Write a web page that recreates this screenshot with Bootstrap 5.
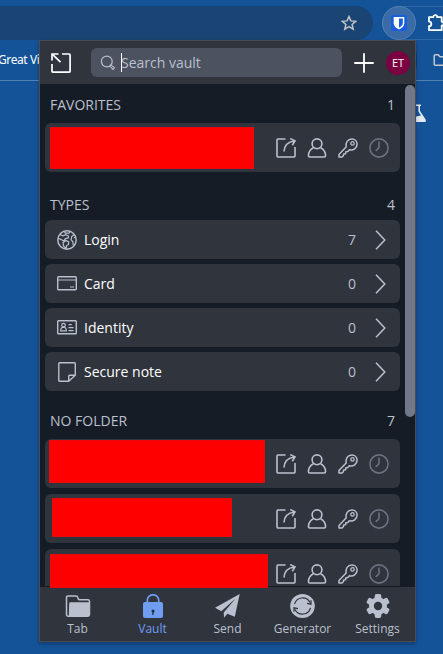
<!DOCTYPE html>
<html lang="en">
<head>
<meta charset="utf-8">
<meta name="viewport" content="width=device-width, initial-scale=1">
<title>Vault</title>
<link href="https://cdn.jsdelivr.net/npm/bootstrap@5.3.0/dist/css/bootstrap.min.css" rel="stylesheet">
<style>
body{width:443px;height:654px;background:#155399;font:14px/20px "Open Sans",sans-serif;color:#bac0ce}
svg{display:block;flex:none;fill:none;stroke:currentColor}
.tabs-edge{height:6px}
.toolbar{height:34px}
.omnibox{width:373px;height:34px;background:#1a4473;border-radius:0 17px 17px 0;padding-right:16px;color:#c3c5ca}
.ext-pill{width:80px;height:34px;margin-left:9px;border:1px solid #2f68a8;border-radius:17px 0 0 17px}
.ext-active{width:34px;height:34px;margin:-1px;background:#3b6ba6;border:1px solid #5180b5;border-radius:50%}
.bookmarks{height:41px;border-bottom:1px solid #5181b5;color:#fff;font:12px/40px "Noto Sans",sans-serif}
.bm-label{margin-left:-2px;letter-spacing:-.4px}
.bm-sep{width:1px;height:16px;background:#0f3f78}
.popup{left:39px;top:40px;width:377px;height:602px;border:1px solid #4a4c51;background:#161c25;box-shadow:0 2px 4px rgba(0,0,0,.3)}
.topbar{height:43px;background:#2f343d;color:#fff;padding:0 5px 0 11px}
.search-field{width:251px;height:29px;margin-left:20px;background:#4c525f;border-radius:6px;padding-left:9px;color:#bac0ce}
.caret{width:1px;height:19px;background:#fff;margin:0 -1px 0 5px}
.avatar-dot{width:24px;height:24px;margin-left:12px;background:#7b0041;font-size:11px;color:#fff}
.vault-list{height:502px;padding-left:5px}
.listing{width:355px}
.heading{height:39px;padding:3px 5px 0}
.heading-types{height:32px;padding-top:2px}
.heading-folder{height:37px;padding-top:1px}
.item{height:49px;margin-bottom:6px;background:#2f343d;border-radius:6px;padding-right:11px}
.item-cut{height:37px;margin-bottom:0;border-radius:6px 6px 0 0}
.item-cut .actions{height:49px}
.actions{gap:11px;height:100%}
.off{color:#6b7180}
.redact{background:#f00;outline:1px solid rgba(200,20,30,.4);outline-offset:-1px;position:relative;z-index:1}
.r1{width:204px;height:42px;margin:4px 0 0 5px}
.r2{width:216px;height:43px;margin:1px 0 0 4px}
.r3{width:180px;height:39px;margin:4px 0 0 7px}
.r4{width:218px;height:34px;margin:5px 0 0 5px}
.kind{height:39px;margin-bottom:5px;background:#2f343d;border-radius:6px;padding:0 14px 0 12px}
.kind-name{color:#fff;margin-left:7px}
.kind-count{margin-right:19px}
.gap-types{height:10px}
.gap-folder{height:6px}
.scroll-track{width:10px}
.thumb{width:10px;height:332px;margin-top:1px;background:#70788a;border-radius:5px}
.bottom-nav{height:54px;background:#2f343d;margin-top:1px}
.tab-item{padding-top:7px;font-size:12px;line-height:17px}
.tab-item span{margin-top:2px}
.tab-on{color:#6f9df1}
.flask{left:416px;top:104px}
</style>
<script src="https://cdn.jsdelivr.net/npm/bootstrap@5.3.0/dist/js/bootstrap.bundle.min.js"></script>
</head>
<body class="position-relative overflow-hidden">
<svg class="d-none">
<symbol id="launch" viewBox="0 0 20 20"><path d="M9.5 1H1.9Q1 1 1 1.9v16.2q0 .9.9.9h16.2q.9 0 .9-.9V9M8 13.5C8.2 8 11.5 4 18.5 3M14.2.6l4.8 2.3-2.7 4.3" stroke-width="1.6"/></symbol>
<symbol id="person" viewBox="0 0 20 20"><circle cx="10" cy="5.8" r="4.9" stroke-width="1.6"/><path d="M6.4 9.8C3.2 11.4 1.6 13.9 1.4 17.6q0 1.4 1.4 1.4h14.4q1.4 0 1.4-1.4c-.2-3.7-1.8-6.2-5-7.8" stroke-width="1.6"/></symbol>
<symbol id="key" viewBox="0 0 20 20"><path d="M8.1 9.1C7.4 5 9.6.9 13.9.9c3 0 5.2 2.3 5.2 5.2 0 4.2-3.9 6.6-7.7 5.6l-1.6 1.8-1.9.2-.3 2-1.9.2-.4 1.9-1.3 1.2H1v-2.6Z" stroke-width="1.5" stroke-linejoin="round"/><circle cx="14.5" cy="5.4" r="1.7" stroke-width="1.3"/></symbol>
<symbol id="clock" viewBox="0 0 20 20"><circle cx="10" cy="10" r="9.1" stroke-width="1.6"/><path d="M10 3.6v5.5q0 1.5-3.4 3.7" stroke-width="1.6"/></symbol>
<symbol id="chev" viewBox="0 0 11 20"><path d="m1 .7 8.8 9.3L1 19.3" stroke-width="1.5"/></symbol>
</svg>

<div class="tabs-edge"></div>
<div class="toolbar d-flex">
  <div class="omnibox flex-shrink-0 d-flex align-items-center justify-content-end"><svg width="16" height="16" viewBox="0 0 16 16"><path d="m8 1.5 1.9 4.4 4.8.4-3.6 3.2 1.1 4.7L8 11.7l-4.2 2.5 1.1-4.7-3.6-3.2 4.8-.4Z" stroke-width="1.5"/></svg></div>
  <div class="ext-pill d-flex align-items-center flex-shrink-0">
    <div class="ext-active d-flex align-items-center justify-content-center flex-shrink-0"><svg width="16" height="16" viewBox="0 0 16 16"><rect width="16" height="16" rx="2" fill="#175ddc" stroke="none"/><path d="M2.7 2h10.6v6.2c0 3-2.4 4.7-5.3 6.2-2.9-1.5-5.3-3.2-5.3-6.2Z" fill="#fff" stroke="none"/><path d="M8 3.6h3.8v4.5c0 2-1.5 3.3-3.8 4.7Z" fill="#175ddc" stroke="none"/></svg></div>
    <svg class="text-white ms-2 ps-1" width="24" height="18" viewBox="0 0 20 18"><path d="M2 3.2h4.2a2 2 0 0 1 4 0h4.5v4.5a2 2 0 0 1 0 4v4.5H2v-4a2.3 2.3 0 0 0 0-4.6Z" stroke-width="1.8" stroke-linejoin="round"/></svg>
  </div>
</div>
<div class="bookmarks d-flex align-items-center">
  <span class="bm-label text-nowrap">Great Vi</span>
  <div class="ms-auto d-flex align-items-center"><div class="bm-sep"></div><svg class="ms-3" width="10" height="14" viewBox="0 0 10 14" color="#c3c7ce"><path d="M12 12.2H2.2q-1 0-1-1V2.7q0-1 1-1h3l1.8 2h5" stroke-width="1.5"/></svg></div>
</div>
<svg class="flask position-absolute" width="12" height="19" viewBox="0 0 12 19"><path d="M0 .4h5V2H4v5l5.5 8.2Q10.6 18 8.5 18H0Z" fill="#e3e9f2" stroke="none"/><path d="M0 2h2.4v5.5L5 11.5 0 12.6Z" fill="#155399" stroke="none"/></svg>

<main class="popup position-absolute">
  <header class="topbar d-flex align-items-center">
    <svg width="20" height="20" viewBox="0 0 20 20"><path d="M11 1h7.2q.9 0 .9.9v16.3q0 .9-.9.9H1.9q-.9 0-.9-.9V11M1 7.5V1h6.5M1.2 1.2l8.3 8" stroke-width="1.7"/></svg>
    <div class="search-field d-flex align-items-center"><svg width="16" height="16" viewBox="0 0 16 16"><circle cx="6.8" cy="6.5" r="5.4" stroke-width="1.2"/><path d="m9.9 11 1.2-1.1 3.4 3-1.5 1.6Z" stroke-width="1.1"/></svg><div class="caret"></div><span>Search vault</span></div>
    <svg class="ms-auto" width="20" height="20" viewBox="0 0 20 20"><path d="M10 .3v19.4M.3 10h19.4" stroke-width="1.8"/></svg>
    <div class="avatar-dot rounded-circle d-flex align-items-center justify-content-center">ET</div>
  </header>

  <div class="vault-list d-flex justify-content-between">
    <div class="listing">
      <div class="heading d-flex align-items-center justify-content-between"><span>FAVORITES</span><span>1</span></div>
      <div class="item d-flex justify-content-between"><div class="redact r1"></div><div class="actions d-flex align-items-center"><svg width="20" height="20"><use href="#launch"/></svg><svg width="20" height="20"><use href="#person"/></svg><svg width="20" height="20"><use href="#key"/></svg><svg class="off" width="20" height="20"><use href="#clock"/></svg></div></div>

      <div class="gap-types"></div>
      <div class="heading heading-types d-flex align-items-center justify-content-between"><span>TYPES</span><span>4</span></div>
      <div class="kind d-flex align-items-center"><svg width="20" height="20" viewBox="0 0 20 20"><circle cx="10" cy="10" r="9.2" stroke-width="1.4"/><path d="M6.8 1.6 9 3.3l3.4-.4.4-1.4M3 4.5l3 1.3 2.5-1.2 2.8 1.2.2 2-3 .8-1.8 2.3-2.9-1.7L1 8.4M6 12.8l3-2.3 2.7 1.4-.2 2.5-2 1.4-.4 2.8-2.4-2.4ZM17.2 4.6l-2.5 1.9-.6 3.4 1.7 1.7.5 3.7M18.8 8l-1.8-.6" stroke-width="1.2"/></svg><span class="kind-name">Login</span><span class="kind-count ms-auto">7</span><svg width="11" height="20"><use href="#chev"/></svg></div>
      <div class="kind d-flex align-items-center"><svg width="20" height="20" viewBox="0 0 20 20"><rect x=".7" y="2.8" width="18.6" height="13" rx="1" stroke-width="1.4"/><path d="M.7 6h18.6M13 13h4" stroke-width="1.2"/></svg><span class="kind-name">Card</span><span class="kind-count ms-auto">0</span><svg width="11" height="20"><use href="#chev"/></svg></div>
      <div class="kind d-flex align-items-center"><svg width="20" height="20" viewBox="0 0 20 20"><rect x=".7" y="2.8" width="18.6" height="13" rx=".8" stroke-width="1.4"/><circle cx="6.5" cy="7.1" r="1.8" stroke-width="1.2"/><path d="M3.6 12.9q0-2.6 1.7-3.6h2.4q1.7 1 1.7 3.6ZM11.5 6.6h3.3M11.5 9.6h5M11.5 12.6h5" stroke-width="1.2"/></svg><span class="kind-name">Identity</span><span class="kind-count ms-auto">0</span><svg width="11" height="20"><use href="#chev"/></svg></div>
      <div class="kind d-flex align-items-center"><svg width="20" height="20" viewBox="0 0 20 20"><path d="M11.7 19.2H2.8q-1 0-1-1V1.8q0-1 1-1h14.5q1 0 1 1v11.5ZM11.7 19.2v-4.9q0-1 1-1h5.6" stroke-width="1.4" stroke-linejoin="round"/></svg><span class="kind-name">Secure note</span><span class="kind-count ms-auto">0</span><svg width="11" height="20"><use href="#chev"/></svg></div>

      <div class="gap-folder"></div>
      <div class="heading heading-folder d-flex align-items-center justify-content-between"><span>NO FOLDER</span><span>7</span></div>
      <div class="item d-flex justify-content-between"><div class="redact r2"></div><div class="actions d-flex align-items-center"><svg width="20" height="20"><use href="#launch"/></svg><svg width="20" height="20"><use href="#person"/></svg><svg width="20" height="20"><use href="#key"/></svg><svg class="off" width="20" height="20"><use href="#clock"/></svg></div></div>
      <div class="item d-flex justify-content-between"><div class="redact r3"></div><div class="actions d-flex align-items-center"><svg width="20" height="20"><use href="#launch"/></svg><svg width="20" height="20"><use href="#person"/></svg><svg width="20" height="20"><use href="#key"/></svg><svg class="off" width="20" height="20"><use href="#clock"/></svg></div></div>
      <div class="item item-cut d-flex justify-content-between"><div class="redact r4"></div><div class="actions d-flex align-items-center"><svg width="20" height="20"><use href="#launch"/></svg><svg width="20" height="20"><use href="#person"/></svg><svg width="20" height="20"><use href="#key"/></svg><svg class="off" width="20" height="20"><use href="#clock"/></svg></div></div>
    </div>
    <div class="scroll-track"><div class="thumb"></div></div>
  </div>

  <nav class="bottom-nav row g-0 text-center">
    <div class="tab-item col d-flex flex-column align-items-center"><svg width="26" height="24" viewBox="0 0 26 24"><path d="M4 22.2H3.2Q1.5 22.2 1.5 20.5V3.6Q1.5 2 3.1 2h8q1.3 0 1.6 1.2l.5 1.6q.3 1 1.4 1h8.2q1.7 0 1.7 1.6v13.1q0 1.7-1.7 1.7Z" stroke-width="1.5"/><path d="M4.2 9.5q0-1.3 1.3-1.3h19v13q0 1-1 1H5q-1.2 0-1.2-1.2Z" fill="currentColor" stroke="none"/></svg><span>Tab</span></div>
    <div class="tab-item tab-on col d-flex flex-column align-items-center"><svg width="24" height="24" viewBox="0 0 24 24"><path d="M6.3 9V6.5a5.7 5.7 0 0 1 11.4 0V9" stroke-width="1.7"/><rect x="2" y="8" width="20" height="16" rx="2" fill="currentColor" stroke="none"/><path d="M12 17v4" stroke="#252d3c" stroke-width="1.3"/><circle cx="12" cy="17" r="1.5" fill="#252d3c" stroke="none"/></svg><span>Vault</span></div>
    <div class="tab-item col d-flex flex-column align-items-center"><svg width="25" height="24" viewBox="0 0 25 24"><path d="M24.7 0 0 13.8l6.3 3.4L20.7 4.5 8.7 18.4 9 23.7l3.4-4 7.4 3Z" fill="currentColor" stroke="none"/></svg><span>Send</span></div>
    <div class="tab-item col d-flex flex-column align-items-center"><svg width="25" height="24" viewBox="0 0 25 24"><ellipse cx="12.5" cy="12" rx="12.3" ry="12" fill="currentColor" stroke="none"/><path d="M4.5 10.2a8.3 8.3 0 0 1 15.5-1.6M20.5 13.8A8.3 8.3 0 0 1 5 15.4M21 6.2v4l-4-.8M4 17.8v-4l4 .8" stroke="#2f343d" stroke-width="1.2"/></svg><span>Generator</span></div>
    <div class="tab-item col d-flex flex-column align-items-center"><svg width="24" height="24" viewBox="0 0 24 24"><g fill="currentColor" stroke="none"><circle cx="12" cy="12" r="9"/><rect x="8.7" y="0" width="6.6" height="24" rx="2"/><rect x="8.7" y="0" width="6.6" height="24" rx="2" transform="rotate(60 12 12)"/><rect x="8.7" y="0" width="6.6" height="24" rx="2" transform="rotate(120 12 12)"/></g><circle cx="12" cy="12" r="4.2" fill="#2f343d" stroke="none"/></svg><span>Settings</span></div>
  </nav>
</main>
</body>
</html>
